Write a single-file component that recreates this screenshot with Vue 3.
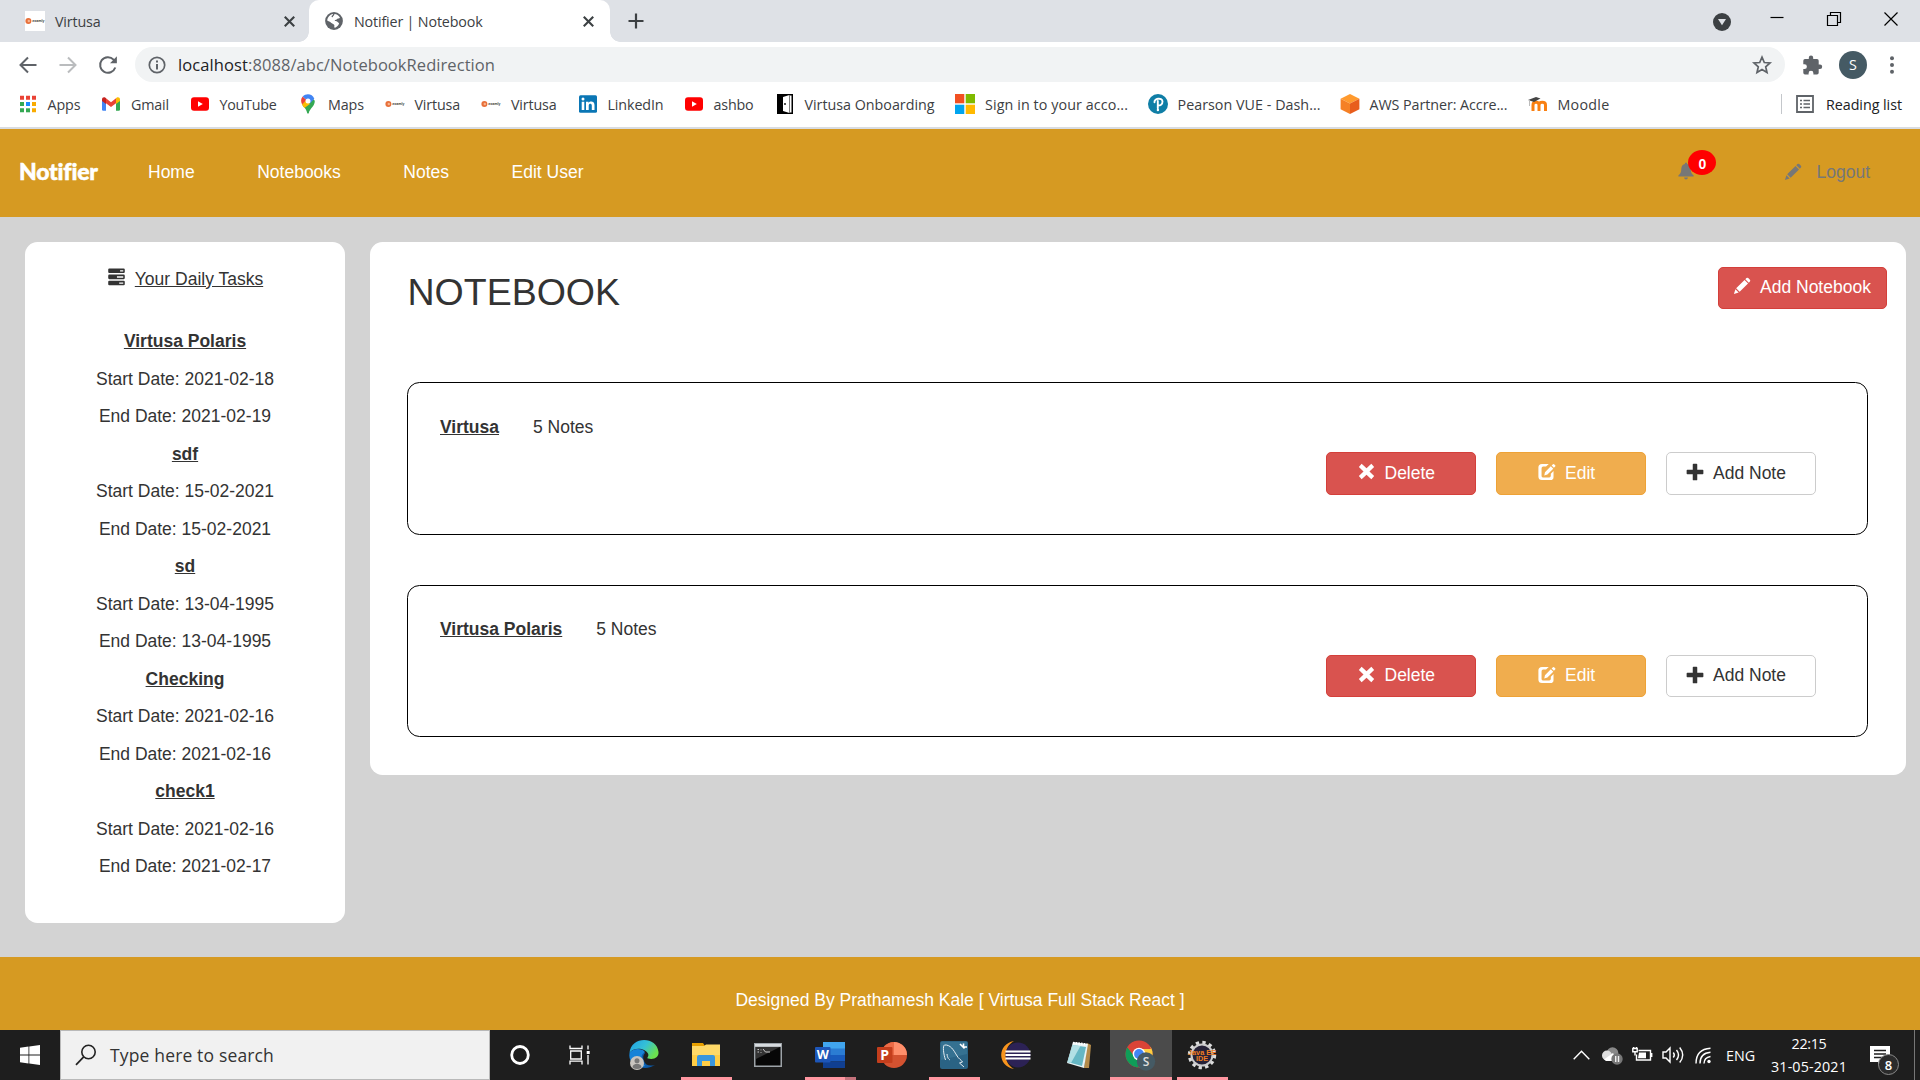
<script setup>
// Stretches or tightens the letter spacing so a label takes the given width.
const vFit = {
  mounted(el, { value }) {
    const natural = el.getBoundingClientRect().width
    el.style.letterSpacing = (value - natural) / el.textContent.length + 'px'
  },
}

const examly =
  '<circle cx="3.400" cy="10" r="3" fill="#e8703a"/><circle cx="3.800" cy="10" r="1.200" fill="#f7b48f"/><text x="7.200" y="11.300" font-family="Open Sans,sans-serif" font-weight="700" font-size="3.400" fill="#444">examly</text>'
const youtube =
  '<rect x="1" y="3.2" width="18" height="13.6" rx="3" fill="#f00"/><path d="M8 7.2v5.6l4.8-2.8z" fill="#fff"/>'

const icons = {
  apps: '<path fill="#ea4335" d="M2 1.7h4v4H2zM8 1.7h4v4H8zM14 1.7h4v4h-4z"/><path fill="#34a853" d="M2 8h4v4H2zM2 14.3h4v4H2z"/><path fill="#1a8cff" d="M8 8h4v4H8z"/><path fill="#f9ab00" d="M14 8h4v4h-4zM14 14.3h4v4h-4z"/><path fill="#34a853" d="M8 14.3h4v4H8z"/>',
  gmail:
    '<path fill="#4285f4" d="M1 6v9.500q0 1.200 1.200 1.200H5V9z"/><path fill="#34a853" d="M19 6v9.500q0 1.200-1.200 1.200H15V9z"/><path fill="#ea4335" d="M5 4.300 10 8.200l5-3.900v5L10 13.100 5 9.300z"/><path fill="#c5221f" d="M1 7V5.300c0-1.900 1.900-2.700 3.200-1.700L5 4.300v5.600z"/><path fill="#fbbc04" d="M19 7V5.300c0-1.900-1.900-2.700-3.200-1.700l-.8.700v5.600z"/>',
  youtube,
  maps: '<path fill="#34a853" d="M4.500 11.500C7 14 8.600 16 9.200 19q.8 1.600 1.600 0c1-4.600 6-6.500 6-12.200L14 4z"/><path fill="#fbbc04" d="M3.900 10.300 8 6l4 4-5.600 4q-1.500-1.500-2.500-3.700z"/><path fill="#ea4335" d="M4.700 2.500 8.500 6 4.100 10.500Q1.800 6 4.700 2.500z"/><path fill="#4285f4" d="M4.700 2.500C8-.9 14.500-.4 16.300 4.700L11.800 9.500 8 5.500z"/><circle cx="10" cy="7" r="2.500" fill="#fff"/>',
  examly,
  linkedin:
    '<rect x="1" y="1.200" width="18" height="17.600" rx="1.500" fill="#0a76b5"/><circle cx="5" cy="5" r="1.500" fill="#fff"/><path fill="#fff" d="M3.700 7.700h2.600V16H3.700zM8 7.700h2.500v1.200c1.500-2.300 6-2 6 2V16h-2.700v-4.400c0-2.400-3.100-2.300-3.100 0V16H8z"/>',
  door: '<path fill="#000" d="M2 0h16v20H2z"/><path fill="#fff" d="M16.500 1.500v17H15v-17zM8 3l6.500-2v18L8 17z"/><circle cx="10" cy="10" r=".9"/>',
  microsoft:
    '<path fill="#f25022" d="M0 0h9.300v9.300H0z"/><path fill="#7fba00" d="M10.700 0H20v9.300h-9.300z"/><path fill="#00a4ef" d="M0 10.700h9.300V20H0z"/><path fill="#ffb900" d="M10.700 10.700H20V20h-9.300z"/>',
  pearson:
    '<circle cx="10" cy="10" r="10" fill="#0f7ea6"/><path d="M6.500 8.300c-.8-3.700 7.600-5.300 8-.9.200 3-2.500 4.400-4.800 3.900M9.800 7v7.300" fill="none" stroke="#fff" stroke-width="1.900" stroke-linecap="round"/><circle cx="9.900" cy="16" r="1.200" fill="#fff"/>',
  aws: '<path fill="#ff9a2e" d="m10 0 9.400 4.700L10 9.400.6 4.700z"/><path fill="#f58025" d="M.6 4.700 10 9.400V20L.6 15.300z"/><path fill="#e85d1c" d="M19.400 4.700 10 9.400V20l9.400-4.700z"/>',
  moodle:
    '<path d="M5 17V11c0-3.600 6-3.600 6 0v6m0-6c0-3.600 6.500-3.600 6.500 0v6" fill="none" stroke="#f98012" stroke-width="3"/><path fill="#444" d="m0 6 8-3 4.500 1.500L6 8z"/><path d="M1.500 6v6" stroke="#bbb" stroke-width="1"/>',

  cortana: '<ellipse cx="15" cy="15" rx="8.300" ry="8.500" fill="none" stroke="#fff" stroke-width="2.800"/>',
  taskview:
    '<path fill="none" stroke="#fff" stroke-width="1.300" d="M3 5.500v3h12v-3M3.700 11h10.600v8H3.700zM3 24.500v-3.300h12v3.300M21 5.500v4M21 15v9.500"/><path fill="#fff" d="M19.700 11h3v3h-3z"/>',
  edge: '<defs><linearGradient id="eg" x1="0" y1="0" x2="1" y2=".5"><stop offset="0" stop-color="#1e9fe8"/><stop offset=".55" stop-color="#35c1d6"/><stop offset="1" stop-color="#6be04e"/></linearGradient></defs><path fill="#0c5aa8" d="M1 12C3 24 13 33 26 25q-9 2-11-4-2-5 1-8z"/><path fill="url(#eg)" d="M.5 13C2-4.500 28-4 29.500 12c.5 5-4 8-10.500 6.500-2-.5 1.500-2 0-5C16 8 5 6.500.5 13z"/><path fill="#1683d8" d="M.5 13C4 7.500 14 8.300 16 12.200c-5 1.800-4.500 9 .5 13.800C6 30-1 21 .5 13z"/><circle cx="8" cy="23" r="7" fill="#c9c5c0"/><circle cx="8" cy="20.800" r="2.500" fill="#777"/><path fill="#777" d="M3.500 27.500c0-5 9-5 9 0q-4.500 3-9 0z"/>',
  explorer:
    '<path fill="#e8a000" d="M1 3h11l2 3v5H1z"/><path fill="#ffd968" d="M1 6h12l2-1.500h14V26H1z"/><path fill="#ffcd45" d="M1 15h28v11H1z"/><path fill="#3a96dd" d="M6 26V17q0-2 2-2h14q2 0 2 2v9h-5v-5h-8v5z"/>',
  cmd: '<path fill="#9da3a8" d="M1 3h28v24H1z"/><path fill="#d8dcdf" d="M2 4h26v2.500H2z"/><path fill="#070707" d="M2.500 7h25v18.500h-25z"/><path fill="#333" d="M3 7h24L3 19z"/><path d="M4.500 9.500h1.500M4.500 12h1.500M8 9.500v.8M8 12v.8M10 9l2.500 3H17" stroke="#ccc" fill="none"/>',
  word: '<path fill="#41a5ee" d="M8 2h22v7H8z"/><path fill="#2b7cd3" d="M8 8.500h22V15H8z"/><path fill="#185abd" d="M8 15h22v6.500H8z"/><path fill="#103f91" d="M8 21.500h22V28H8z"/><rect y="7" width="15.500" height="15.500" rx="1" fill="#1d56b8"/><text x="7.700" y="19.300" text-anchor="middle" font-family="Open Sans,sans-serif" font-size="12.500" font-weight="700" fill="#fff">W</text>',
  ppt: '<circle cx="17" cy="15" r="13" fill="#d35230"/><path fill="#ff8f6b" d="M17 2a13 13 0 0 1 13 13H17z"/><path fill="#ed6c47" d="M17 2v13H4A13 13 0 0 1 17 2z"/><rect y="7" width="15.500" height="16" rx="1" fill="#c43e1c"/><text x="7.700" y="19.800" text-anchor="middle" font-family="Open Sans,sans-serif" font-size="14" font-weight="700" fill="#fff">P</text>',
  mysql:
    '<rect x="1" y="1" width="28" height="28" rx="2" fill="#2a6384"/><path fill="#3b7797" d="M2 2h26v12L2 20z" opacity=".7"/><path d="M6.500 20C4.500 14 3.500 6 5.500 5c6-.5 9 5 12 10 2 4 5 5 6 7l-3 1 4.500 4M8 14c.5 4 1.500 5 3 6" fill="none" stroke="#e5edf2" stroke-width="1"/><path d="m21 4 4.500 4.500m-1-5v3.500h3.500" stroke="#fff" stroke-width="1.600" fill="none"/>',
  eclipse:
    '<path fill="#f7941e" d="M13 1C-4 4-4 26 13 29 2 23 2 7 13 1z"/><circle cx="17" cy="15" r="12.500" fill="#2c2255"/><path fill="#fff" d="M4.500 10.500h25v2h-25zM4.500 14h25v2h-25zM4.500 17.500h25v2h-25z"/>',
  notepad:
    '<path fill="#b48b4a" d="m24 3 4 2-2 23-5 0z"/><path fill="#e8f4f5" d="m10 2 15 2-4 24-17-5z"/><path fill="#65b7c4" d="m9.500 5 13.500 2-4 19L4.500 22z"/><path fill="#b2e0e5" d="m9.500 5 8 1L8 23l-3.500-1z"/><path d="m10 3 14 1.500" stroke="#fff" stroke-width="2.500" stroke-dasharray="1.500 1.200"/>',
  chrome:
    '<circle cx="14" cy="14" r="13.500" fill="#db4437"/><path fill="#0f9d58" d="M2.300 7.200A13.500 13.500 0 0 0 13 27.500l6-10z"/><path fill="#ffcd40" d="M14 7.500h12A13.500 13.500 0 0 1 14 27.500l5.500-9z"/><path fill="#db4437" d="M2.300 7.200 9 16l5-7h12A13.500 13.500 0 0 0 2.300 7.200z"/><circle cx="14" cy="14" r="6.300" fill="#fff"/><circle cx="14" cy="14" r="4.900" fill="#4285f4"/><circle cx="21" cy="21.500" r="9.200" fill="#455a64"/><text x="21" y="26" text-anchor="middle" font-family="Open Sans,sans-serif" font-size="12" font-weight="600" fill="#ddd">S</text>',
  javaee:
    '<circle cx="15" cy="15" r="12.500" fill="none" stroke="#ddd" stroke-width="3.400" stroke-dasharray="3.300 3.240"/><circle cx="15" cy="15" r="10.500" fill="#262238" stroke="#ccc" stroke-width="2"/><text x="15" y="14.500" text-anchor="middle" font-family="Liberation Sans,sans-serif" font-size="7.300" font-weight="700" fill="#ef7d22">Java EE</text><text x="15" y="21" text-anchor="middle" font-family="Liberation Sans,sans-serif" font-size="7.300" font-weight="700" fill="#ef7d22">IDE</text>',

  pencil:
    '<path d="m1 19 1.700-5.300 3.600 3.600zM3.500 12.600 12.800 3.300l3.900 3.900-9.300 9.300zM13.700 2.400l1.200-1.200q1-.9 2 0L18.800 3.100q.9 1 0 2l-1.200 1.200z"/>',
  remove: '<path d="m4.300 1 5.700 5.300L15.700 1 19 4.700 13.500 10l5.500 5.300-3.300 3.700-5.700-5.300L4.300 19 1 15.300 6.500 10 1 4.700z"/>',
  edit: '<path fill-rule="evenodd" d="M5 1h7.500L9.500 4H6.300Q4.500 4 4.500 6v8.500Q4.500 16 6 16h7q1.800 0 1.800-1.700V12l3-3v6.500q0 3.500-3.500 3.500H5q-4 0-4-4V5q0-4 4-4z"/><path d="m7.500 13.800.8-3.600L14.800 3.700l2.700 2.700-6.500 6.500zM15.700 2.800l1.500-1.500q.6-.5 1.200 0l1.300 1.300q.5.600 0 1.200l-1.500 1.500z"/>',
  plus: '<path d="M8.300.8h3.400q.8 0 .8.800v5.900h6q.8 0 .8.800v3.400q0 .8-.8.800h-6v6q0 .8-.8.800H8.300q-.8 0-.8-.8v-6h-6q-.8 0-.8-.8V8.300q0-.8.800-.8h6V1.600q0-.8.800-.8z"/>',
  tasks:
    '<path fill-rule="evenodd" d="M2 .5h16q1.200 0 1.200 1.200v2.700q0 1.200-1.200 1.200H2Q.8 5.600.8 4.400V1.700Q.8.500 2 .5zm12 2v1.300h3.500V2.500zM2 7.300h16q1.200 0 1.200 1.200v2.700q0 1.200-1.200 1.200H2Q.8 12.400.8 11.200V8.500Q.8 7.300 2 7.300zm8.500 2v1.400h7V9.300zM2 14.100h16q1.200 0 1.200 1.200V18q0 1.200-1.200 1.200H2Q.8 19.200.8 18v-2.700q0-1.200 1.200-1.200zm11 2v1.400h4.500v-1.400z"/>',
  bell: '<path d="M10 .5q1.400 0 1.400 1.700c3 .8 3.800 3 3.900 6.300.1 3 1 4.500 3.200 6.500v1H1.500v-1c2.200-2 3.100-3.500 3.200-6.500.1-3.300.9-5.500 3.900-6.300Q8.600.5 10 .5zM7.800 17.300h4.400q-.4 2.200-2.200 2.200t-2.200-2.200z"/>',
}

// slot = distance to the next bookmark, fit = label width
const bookmarks = [
  { icon: 'apps', label: 'Apps', slot: 83.5, fit: 33 },
  { icon: 'gmail', label: 'Gmail', slot: 88.5, fit: 38 },
  { icon: 'youtube', label: 'YouTube', slot: 108.5, fit: 57 },
  { icon: 'maps', label: 'Maps', slot: 86.5, fit: 36 },
  { icon: 'examly', label: 'Virtusa', slot: 96.5, fit: 45.5 },
  { icon: 'examly', label: 'Virtusa', slot: 96.5, fit: 45.5 },
  { icon: 'linkedin', label: 'LinkedIn', slot: 106, fit: 56 },
  { icon: 'youtube', label: 'ashbo', slot: 91, fit: 40 },
  { icon: 'door', label: 'Virtusa Onboarding', slot: 180.5, fit: 130 },
  { icon: 'microsoft', label: 'Sign in to your acco...', slot: 192.5, fit: 143 },
  { icon: 'pearson', label: 'Pearson VUE - Dash...', slot: 192, fit: 143 },
  { icon: 'aws', label: 'AWS Partner: Accre...', slot: 188, fit: 138 },
  { icon: 'moodle', label: 'Moodle', slot: 90, fit: 52 },
]

const tasks = [
  { name: 'Virtusa Polaris', start: '2021-02-18', end: '2021-02-19' },
  { name: 'sdf', start: '15-02-2021', end: '15-02-2021' },
  { name: 'sd', start: '13-04-1995', end: '13-04-1995' },
  { name: 'Checking', start: '2021-02-16', end: '2021-02-16' },
  { name: 'check1', start: '2021-02-16', end: '2021-02-17' },
]

const notebooks = [
  { name: 'Virtusa', count: 5 },
  { name: 'Virtusa Polaris', count: 5 },
]

const taskbar = [
  { icon: 'cortana' },
  { icon: 'taskview' },
  { icon: 'edge' },
  { icon: 'explorer', open: true },
  { icon: 'cmd' },
  { icon: 'word', open: true, stacked: true },
  { icon: 'ppt' },
  { icon: 'mysql', open: true },
  { icon: 'eclipse' },
  { icon: 'notepad' },
  { icon: 'chrome', open: true, active: true },
  { icon: 'javaee', open: true },
]
</script>

<template>
  <div class="screen">
    <div class="tabstrip">
      <div class="tab">
        <svg class="favicon" viewBox="0 0 20 20" v-html="icons.examly"></svg>
        <span v-fit="45.5">Virtusa</span>
        <svg class="close" viewBox="0 0 10 10"><path d="m.7.700 8.600 8.600m0-8.600L.7 9.300" /></svg>
      </div>
      <div class="tab current">
        <svg class="globe" viewBox="0 0 18 18">
          <circle cx="9" cy="9" r="8.900" fill="#5f6368" />
          <path fill="#fff" d="M9.500 2c2 0 4.500 1.500 5.500 3.800-.8 1-2 .5-2.800 1.200-.5.900-1.800.6-2.400 1.300-.4.800.9.600 1.800.9 1.300.3 1.400 1.600 2.500 1.800-.3 2.500-2.500 4-4 4.700l-1-.5c.6-1.500.4-2.500-.6-3L6 10.800C5.500 9.500 3 9.200 2.200 8.500 2.500 5 5.500 2.300 8 2.100c.4 1.100-1.300 1.300-1.500 2.200.3 1 .6 1 1.300.6.200-1 1.500-1.300 1.700-2.900z" />
        </svg>
        <span v-fit="128.500">Notifier | Notebook</span>
        <svg class="close" viewBox="0 0 10 10"><path d="m.7.700 8.600 8.600m0-8.600L.7 9.300" /></svg>
      </div>
      <svg class="newtab" viewBox="0 0 16 16"><path d="M8 .5v15M.5 8h15" stroke="#3c4043" stroke-width="2.200" /></svg>
      <div class="window-controls">
        <svg width="18" height="18" viewBox="0 0 18 18"><circle cx="9" cy="9" r="9" fill="#3c4043" /><path fill="#dee1e6" d="M5 6h8l-4 6.300z" /></svg>
        <svg width="14" height="14" viewBox="0 0 14 14"><path d="M.5 5.500h13" /></svg>
        <svg width="14" height="14" viewBox="0 0 14 14"><path d="M.5 3.500h10v10H.5zM3.500 3.500v-3h10v10h-3" /></svg>
        <svg width="14" height="14" viewBox="0 0 14 14"><path d="m.5.500 13 13m0-13-13 13" /></svg>
      </div>
    </div>

    <div class="toolbar">
      <svg class="nav-btn" viewBox="0 0 20 20"><path d="M18.500 10H2.500M10 2.500 2.500 10l7.500 7.500" /></svg>
      <svg class="nav-btn faded" viewBox="0 0 20 20"><path d="M1.500 10h16M10 2.500l7.500 7.500-7.500 7.500" /></svg>
      <svg class="nav-btn" viewBox="0 0 20 20"><path d="M17.300 12.500A7.800 7.800 0 1 1 15.600 4.600L17.500 6.500" /><path class="head" d="M18.900 1.300v6.900H12z" /></svg>
      <div class="omnibox">
        <svg width="18" height="18" viewBox="0 0 18 18"><circle cx="9" cy="9" r="7.700" fill="none" stroke="#5f6368" stroke-width="1.700" /><path fill="#5f6368" d="M8 4.600h2v2H8zM8 8h2v5.400H8z" /></svg>
        <p class="url"><span v-fit="70" class="host">localhost</span><span v-fit="247">:8088/abc/NotebookRedirection</span></p>
        <svg width="20" height="20" viewBox="0 0 20 20"><path d="m10 2.200 2.300 5.300 5.700.5-4.300 3.800 1.300 5.700-5-3-5 3 1.300-5.700L2 8l5.700-.5z" fill="none" stroke="#5f6368" stroke-width="1.700" /></svg>
      </div>
      <svg class="puzzle" viewBox="0 0 20 20"><path fill="#5f6368" d="M18 9.500h-1.300V5.700q0-1.700-1.700-1.700h-3.800V2.800a2.200 2.200 0 0 0-4.400 0V4H3Q1.300 4 1.300 5.700v3.600h1.200a2.400 2.400 0 0 1 0 4.800H1.300v3.600q0 1.700 1.700 1.700h3.600v-1.200a2.400 2.400 0 0 1 4.800 0v1.200H15q1.700 0 1.700-1.700v-3.800H18a2.200 2.200 0 0 0 0-4.400z" /></svg>
      <span class="avatar">S</span>
      <svg class="dots" viewBox="0 0 6 20"><circle cx="3" cy="3.200" r="2" /><circle cx="3" cy="10" r="2" /><circle cx="3" cy="16.800" r="2" /></svg>
    </div>

    <div class="bookmarks">
      <div v-for="(b, i) in bookmarks" :key="i" class="bookmark" :style="{ width: b.slot + 'px' }">
        <svg viewBox="0 0 20 20" v-html="icons[b.icon]"></svg>
        <span v-fit="b.fit">{{ b.label }}</span>
      </div>
      <div class="reading">
        <svg width="18" height="18" viewBox="0 0 18 18"><path fill="none" stroke="#5f6368" stroke-width="1.800" d="M1 1h16v16H1z" /><path stroke="#5f6368" stroke-width="1.500" d="M4 5.500h2M7.500 5.500H14M4 9h2M7.500 9H14M4 12.500h2M7.500 12.500H14" /></svg>
        <span v-fit="76">Reading list</span>
      </div>
    </div>

    <nav class="site-nav">
      <span class="brand"><span v-fit="79">Notifier</span></span>
      <a>Home</a>
      <a>Notebooks</a>
      <a>Notes</a>
      <a>Edit User</a>
      <div class="alerts">
        <svg class="glyph" viewBox="0 0 20 20" v-html="icons.bell"></svg>
        <span class="count">0</span>
      </div>
      <div class="logout">
        <svg class="glyph" viewBox="0 0 20 20" v-html="icons.pencil"></svg>
        <span>Logout</span>
      </div>
    </nav>

    <main class="content">
      <aside class="sidebar">
        <p class="side-title">
          <svg class="glyph" viewBox="0 0 20 20" v-html="icons.tasks"></svg>
          <u>Your Daily Tasks</u>
        </p>
        <template v-for="t in tasks" :key="t.name">
          <p><b>{{ t.name }}</b></p>
          <p>Start Date: {{ t.start }}</p>
          <p>End Date: {{ t.end }}</p>
        </template>
      </aside>

      <section class="panel">
        <header>
          <h1>NOTEBOOK</h1>
          <button class="btn danger add-notebook">
            <svg class="glyph" viewBox="0 0 20 20" v-html="icons.pencil"></svg><span>Add Notebook</span>
          </button>
        </header>
        <article v-for="n in notebooks" :key="n.name" class="card">
          <p><b>{{ n.name }}</b><span>{{ n.count }} Notes</span></p>
          <div class="actions">
            <button class="btn danger delete"><svg class="glyph" viewBox="0 0 20 20" v-html="icons.remove"></svg><span>Delete</span></button>
            <button class="btn warning edit"><svg class="glyph" viewBox="0 0 20 20" v-html="icons.edit"></svg><span>Edit</span></button>
            <button class="btn plain add"><svg class="glyph" viewBox="0 0 20 20" v-html="icons.plus"></svg><span>Add Note</span></button>
          </div>
        </article>
      </section>
    </main>

    <footer class="site-footer">Designed By Prathamesh Kale [ Virtusa Full Stack React ]</footer>

    <div class="taskbar">
      <div class="start">
        <svg width="20" height="20" viewBox="0 0 20 20"><path fill="#fff" d="M0 2.800 8.500 1.500v8H0zM9.300 1.400 20 0v9.500H9.300zM0 10.400h8.500v8L0 17.200zM9.300 10.400H20V20L9.300 18.600z" /></svg>
      </div>
      <div class="search">
        <svg width="22" height="22" viewBox="0 0 22 22"><circle cx="13.500" cy="8" r="6.700" fill="none" stroke="#222" stroke-width="1.600" /><path d="M8.700 12.800 1 20.800" stroke="#222" stroke-width="1.700" /></svg>
        <span v-fit="164">Type here to search</span>
      </div>
      <div v-for="t in taskbar" :key="t.icon" class="task" :class="{ open: t.open, active: t.active, stacked: t.stacked }">
        <svg viewBox="0 0 30 30" v-html="icons[t.icon]"></svg>
      </div>
      <div class="tray">
        <svg class="chevron" width="17" height="10" viewBox="0 0 17 10"><path d="m.7 9.300 7.800-8 7.800 8" /></svg>
        <svg class="cloud" width="21" height="18" viewBox="0 0 21 18"><circle cx="10.500" cy="6" r="5.800" fill="#888" /><circle cx="5" cy="8.500" r="5" fill="#ddd" /><path fill="#fff" d="M2 12.500 11 6l5 8H4z" /><circle cx="15" cy="12" r="5.700" fill="#777" /><path d="M13.700 9v6M16.500 9v6" stroke="#eee" /></svg>
        <svg class="battery" width="21" height="16" viewBox="0 0 21 16"><path d="M6.500 3.500h12v9.500h-14V7.500M19.700 6v4" /><path fill="#fff" stroke="none" d="M7 5.500h7v5.800H6z" /><path d="M.8 1.500h4.400v3.300H.8zM3 5v3.500M1.700 0v2M4.500 0v2" /></svg>
        <svg class="speaker" width="22" height="18" viewBox="0 0 22 18"><path d="M1 6h3l4-4v14l-4-4H1zM11.300 6.500q2 2.500 0 5M14.500 4q4 5 0 10M17.700 1.500q6 7.500 0 15" /></svg>
        <svg class="wifi" width="17" height="17" viewBox="0 0 17 17"><path d="M1 16.500Q1 2 15.500 1.200M5 16.500Q5 6.200 15.500 5.300M9 16.500q0-6 6.500-7" /><circle cx="14" cy="14.500" r="1.700" fill="#fff" stroke="none" /></svg>
        <span class="lang"><span v-fit="29">ENG</span></span>
        <div class="clock"><span v-fit="35">22:15</span><span v-fit="76">31-05-2021</span></div>
        <div class="notify">
          <svg width="20" height="19" viewBox="0 0 20 19"><path class="bubble" d="M0 0h20v16h-9l-3 3v-3H0z" /><path class="lines" d="M4 4.500h12M4 8h12M4 11.500h8" /></svg>
          <span class="num">8</span>
        </div>
      </div>
    </div>
  </div>
</template>

<style>
html,
body {
  margin: 0;
  overflow: hidden;
}
</style>

<style scoped>
.screen {
  width: 1920px;
  height: 1080px;
  display: flex;
  flex-direction: column;
  overflow: hidden;
  background: #d3d3d3;
  font-family: 'Liberation Sans', Arial, sans-serif;
  font-size: 17.5px;
  line-height: 25px;
  color: #333;
}
svg {
  display: block;
  flex: none;
  overflow: visible;
}
span {
  white-space: nowrap;
}
.tabstrip,
.toolbar,
.bookmarks {
  flex: none;
  font-family: 'Open Sans', sans-serif;
  font-size: 14.3px;
  color: #3c4043;
  background: #fff;
  display: flex;
  align-items: center;
}
.tabstrip {
  height: 42px;
  background: #dee1e6;
}
.tab {
  width: 309px;
  height: 42px;
  display: flex;
  align-items: center;
  padding: 0 14px 0 25px;
  box-sizing: border-box;
}
.favicon {
  width: 20px;
  height: 20px;
  background: #fff;
  margin-right: 10px;
}
.tab.current {
  position: relative;
  width: 301px;
  padding: 0 16px;
  background: #fff;
  border-radius: 10px 10px 0 0;
}
.tab.current::before,
.tab.current::after {
  content: '';
  position: absolute;
  bottom: 0;
  width: 10px;
  height: 10px;
}
.tab.current::before {
  left: -10px;
  background: radial-gradient(circle at 0 0, transparent 9.5px, #fff 10px);
}
.tab.current::after {
  right: -10px;
  background: radial-gradient(circle at 100% 0, transparent 9.5px, #fff 10px);
}
.globe {
  width: 18px;
  height: 18px;
  margin-right: 11px;
}
.close {
  width: 11px;
  height: 11px;
  margin-left: auto;
  fill: none;
  stroke: #3c4043;
  stroke-width: 1.9;
}
.newtab {
  width: 16px;
  height: 16px;
  margin-left: 18px;
}
.window-controls {
  margin: 0 22px 0 auto;
  display: flex;
  gap: 43px;
  align-items: center;
  height: 34px;
  padding-bottom: 5px;
}
.window-controls svg {
  fill: none;
  stroke: #000;
  stroke-width: 1.2;
}
.window-controls svg:first-child {
  stroke: none;
  margin: 6px -4px 0 0;
}
.toolbar {
  height: 45px;
  padding: 0 0 0 17.5px;
  box-sizing: border-box;
}
.nav-btn {
  width: 20px;
  height: 20px;
  margin-right: 20px;
  fill: none;
  stroke: #5f6368;
  stroke-width: 2;
}
.nav-btn .head {
  fill: #5f6368;
  stroke: none;
}
.nav-btn.faded {
  stroke: #babcbe;
}
.omnibox {
  width: 1650px;
  height: 35px;
  box-sizing: border-box;
  margin-left: -2.5px;
  padding: 0 13px 0 13px;
  border-radius: 18px;
  background: #f1f3f4;
  display: flex;
  align-items: center;
}
.url {
  margin: 0 auto 0 12px;
  font-size: 16.5px;
  color: #5f6368;
}
.host {
  color: #202124;
}
.puzzle {
  width: 20px;
  height: 20px;
  margin-left: 17px;
}
.avatar {
  width: 28px;
  height: 28px;
  margin: 0 22px 0 17px;
  border-radius: 50%;
  background: #455a64;
  color: #fff;
  line-height: 28px;
  text-align: center;
}
.dots {
  width: 6px;
  height: 20px;
  fill: #5f6368;
}
.bookmarks {
  height: 42px;
  padding: 0 18px 6px 17.5px;
  box-sizing: border-box;
  border-bottom: 2px solid #d9dce1;
}
.bookmark {
  display: flex;
  align-items: center;
  gap: 10px;
  flex: none;
}
.bookmark svg {
  width: 20px;
  height: 20px;
}
.reading {
  margin-left: auto;
  height: 20px;
  display: flex;
  align-items: center;
  gap: 12px;
  padding-left: 14px;
  border-left: 1px solid #c4c7cb;
  color: #202124;
}
.site-nav {
  flex: none;
  height: 88px;
  padding: 0 50px 3px 20px;
  box-sizing: border-box;
  background: #d69a22;
  display: flex;
  align-items: center;
  color: #fff;
}
.site-nav a {
  margin-right: 62.5px;
  padding-top: 2px;
}
.brand {
  width: 129px;
  margin-left: -1px;
  font-family: Lato, sans-serif;
  font-weight: 900;
  font-size: 23px;
  -webkit-text-stroke: 0.5px #fff;
}
.glyph {
  width: 18px;
  height: 18px;
  fill: currentColor;
}
.alerts {
  position: relative;
  margin-left: auto;
  margin-top: -1px;
  color: #777;
}
.count {
  position: absolute;
  left: 11px;
  top: -12px;
  width: 28px;
  height: 25px;
  border-radius: 50%;
  background: #f00;
  color: #fff;
  font-size: 14px;
  font-weight: 700;
  line-height: 28px;
  text-align: center;
}
.logout {
  display: flex;
  align-items: center;
  gap: 14px;
  margin-left: 89px;
  color: #777;
}
.logout span {
  padding-top: 2px;
}
.content {
  flex: none;
  height: 740px;
  padding: 25px 14px 0 25px;
  box-sizing: border-box;
  display: flex;
  align-items: flex-start;
  gap: 25px;
}
.sidebar {
  width: 320px;
  height: 681px;
  padding-top: 24.5px;
  box-sizing: border-box;
  border-radius: 12.5px;
  background: #fff;
  text-align: center;
}
p {
  margin: 0;
}
.sidebar p {
  margin-bottom: 12.5px;
}
.sidebar .side-title {
  display: flex;
  justify-content: center;
  gap: 9px;
  margin-bottom: 37.5px;
}
.side-title .glyph {
  margin-top: 1px;
  width: 19px;
}
.sidebar b,
.card b {
  text-decoration: underline;
}
.panel {
  width: 1536px;
  height: 533px;
  padding: 25px 38px 0 37px;
  box-sizing: border-box;
  border-radius: 12.5px;
  background: #fff;
}
.panel header {
  display: flex;
  justify-content: space-between;
  align-items: flex-start;
  height: 115px;
  margin-right: -19px;
}
h1 {
  margin: 5px 0 0 0.5px;
  font-weight: 500;
  font-size: 37.5px;
  line-height: 41px;
}
.btn {
  width: 150px;
  height: 43px;
  padding: 0;
  display: flex;
  align-items: flex-start;
  box-sizing: border-box;
  border: 1px solid;
  border-radius: 5px;
  font: inherit;
}
.btn .glyph {
  margin-top: 10px;
}
.btn span {
  margin-top: 8px;
}
.danger {
  color: #fff;
  background: #d9534f;
  border-color: #d43f3a;
}
.warning {
  color: #fff;
  background: #f0ad4e;
  border-color: #eea236;
}
.plain {
  color: #333;
  background: #fff;
  border-color: #ccc;
}
.add-notebook {
  width: 169px;
  height: 42px;
  padding-left: 14px;
  gap: 9px;
}
.add-notebook .glyph {
  margin-top: 9px;
}
.add-notebook span {
  margin-top: 7px;
}
.delete {
  padding-left: 31px;
  gap: 9.5px;
}
.delete .glyph {
  width: 17px;
  height: 17px;
}
.edit {
  padding-left: 39.5px;
  gap: 9.5px;
}
.edit .glyph {
  width: 19px;
}
.add {
  padding-left: 19px;
  gap: 9px;
}
.card {
  height: 153px;
  margin-bottom: 50px;
  padding: 32px 51px 0 32px;
  box-sizing: border-box;
  border: 1px solid #000;
  border-radius: 12.5px;
}
.card b {
  margin-right: 34px;
}
.actions {
  display: flex;
  justify-content: flex-end;
  gap: 20px;
  margin-top: 12px;
}
.card:last-child {
  height: 152px;
  padding-top: 31px;
}
.card:last-child .actions {
  margin-top: 13px;
}
.card:last-child .btn {
  height: 42px;
}
.card:last-child .btn span {
  margin-top: 7px;
}
.site-footer {
  flex: none;
  height: 73px;
  padding-top: 31px;
  box-sizing: border-box;
  background: #d69a22;
  color: #fff;
  text-align: center;
}
.taskbar {
  flex: none;
  height: 50px;
  background: #1e1e1e;
  display: flex;
  align-items: stretch;
  font-family: 'Open Sans', sans-serif;
}
.start {
  width: 60px;
  display: flex;
  align-items: center;
  justify-content: center;
}
.search {
  width: 430px;
  padding-left: 14px;
  box-sizing: border-box;
  border: 1px solid #b9b9b9;
  background: #f1f1f1;
  color: #333;
  font-size: 17.5px;
  display: flex;
  align-items: center;
  gap: 13px;
}
.task {
  position: relative;
  width: 62px;
  padding-right: 2px;
  box-sizing: border-box;
  display: flex;
  align-items: center;
  justify-content: center;
}
.task svg {
  width: 30px;
  height: 30px;
}
.task.open::after {
  content: '';
  position: absolute;
  left: 5px;
  right: 6px;
  bottom: 0;
  height: 3px;
  background: #ff96a0;
}
.task.stacked::after {
  background: linear-gradient(90deg, #ff96a0 40px, #c4727b 40px);
}
.task.active {
  background: #4b4b4b;
}
.task.active::after {
  left: 0;
  right: 0;
}
.tray {
  margin-left: auto;
  padding-right: 24px;
  margin-right: 5px;
  border-right: 1px solid #777;
  display: flex;
  align-items: center;
  color: #fff;
  font-size: 14.3px;
}
.tray svg {
  fill: none;
  stroke: #fff;
  stroke-width: 1.4;
}
.tray .cloud {
  margin: 2px 0 0 12px;
  stroke: none;
}
.battery {
  margin: 0 0 0 9px;
}
.speaker {
  margin-left: 9px;
}
.wifi {
  margin: 0 0 0 11px;
}
.lang {
  width: 29px;
  margin: 0 0 0 14px;
}
.clock {
  width: 76px;
  margin: -1px 0 0 16px;
  display: flex;
  flex-direction: column;
  align-items: center;
  line-height: 23px;
}
.notify {
  position: relative;
  margin-left: 16px;
}
.notify svg {
  margin-left: 7px;
}
.notify .bubble {
  fill: #fff;
  stroke: none;
}
.notify .lines {
  stroke: #1e1e1e;
}
.num {
  position: absolute;
  left: 15px;
  top: 8px;
  width: 21px;
  height: 21px;
  border: 1px solid #8a8a8a;
  border-radius: 50%;
  background: #2b2b2b;
  font-size: 13px;
  font-weight: 600;
  line-height: 20px;
  text-align: center;
  box-sizing: border-box;
}
</style>
